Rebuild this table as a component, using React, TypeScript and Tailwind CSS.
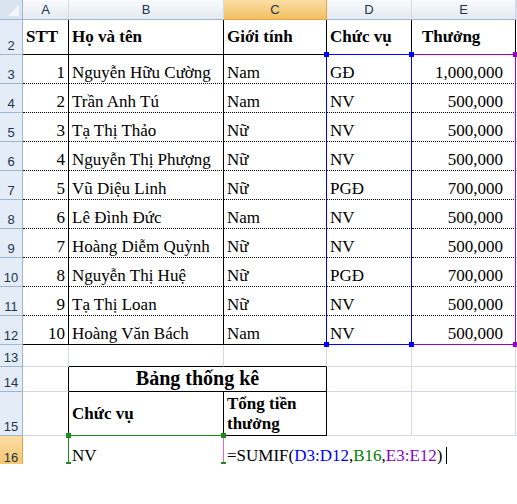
import React from "react";

const data: [number, string, string, string, string][] = [
  [1, "Nguyễn Hữu Cường", "Nam", "GĐ", "1,000,000"],
  [2, "Trần Anh Tú", "Nam", "NV", "500,000"],
  [3, "Tạ Thị Thảo", "Nữ", "NV", "500,000"],
  [4, "Nguyễn Thị Phượng", "Nữ", "NV", "500,000"],
  [5, "Vũ Diệu Linh", "Nữ", "PGĐ", "700,000"],
  [6, "Lê Đình Đức", "Nam", "NV", "500,000"],
  [7, "Hoàng Diễm Quỳnh", "Nữ", "NV", "500,000"],
  [8, "Nguyễn Thị Huệ", "Nữ", "PGĐ", "700,000"],
  [9, "Tạ Thị Loan", "Nữ", "NV", "500,000"],
  [10, "Hoàng Văn Bách", "Nam", "NV", "500,000"],
];

const rh =
  "flex items-end justify-center border-r border-b border-[#9eb6ce] bg-[#e4ecf7] pb-[2px] font-['Liberation_Sans',Arial,sans-serif] text-[13px] leading-none text-[#20344d]";
const rhSel =
  "flex items-end justify-center border-r border-b border-[#f0a04a] bg-linear-to-b from-[#fbdda5] to-[#f4c56a] pb-[2px] font-['Liberation_Sans',Arial,sans-serif] text-[13px] leading-none text-[#20344d]";
const ch =
  "flex items-center justify-center border-r border-b border-r-[#d2dce8] border-b-[#9eb6ce] bg-linear-to-b from-[#f9fbfd] to-[#e5eaf2] font-['Liberation_Sans',Arial,sans-serif] text-[13px] leading-none text-[#20344d]";
const chSel =
  "flex items-center justify-center border-r border-b border-[#f0a04a] bg-linear-to-b from-[#fbdda5] to-[#f2c160] font-['Liberation_Sans',Arial,sans-serif] text-[13px] leading-none text-[#20344d]";

const base =
  "flex overflow-hidden whitespace-nowrap border-r border-b border-[#d0d7e5] px-[3px] leading-[20px] text-[17px] text-black";

function Sq({ c, x, y }: { c: string; x: number; y: number }) {
  return (
    <div
      className={`absolute h-[5px] w-[5px] ${c}`}
      style={{ left: x, top: y }}
    />
  );
}

export default function App() {
  return (
    <div className="h-[504px] w-[517px] bg-white font-['Liberation_Serif','Times_New_Roman',serif]">
      <div className="relative h-[464px] overflow-hidden">
        <div className="grid grid-cols-[23px_46px_155px_103px_85px_104px_1px] grid-rows-[20px_35px_repeat(10,29px)_22px_25px_44px_31px]">
          {/* header row */}
          <div className="relative border-r border-b border-[#9eb6ce] bg-[#d9e4f1]">
            <svg className="absolute right-[3px] bottom-[3px]" width="11" height="11" viewBox="0 0 11 11">
              <polygon points="11,0 11,11 0,11" fill="#f3f6fa" />
            </svg>
          </div>
          <div className={ch}>A</div>
          <div className={ch}>B</div>
          <div className={chSel}>C</div>
          <div className={ch}>D</div>
          <div className={ch}>E</div>
          <div className={ch}></div>

          {/* row 2 */}
          <div className={rh}>2</div>
          <div className={`${base} items-center border-r-black border-b-black font-bold`}>STT</div>
          <div className={`${base} items-center border-r-black border-b-black font-bold`}>Họ và tên</div>
          <div className={`${base} items-center border-r-black border-b-black font-bold`}>Giới tính</div>
          <div className={`${base} items-center border-r-black border-b-black font-bold`}>Chức vụ</div>
          <div className={`${base} items-center border-r-black border-b-black pl-[10px] font-bold`}>Thưởng</div>
          <div className={`${base} px-0`}></div>

          {data.map((r, i) => {
            const last = i === data.length - 1;
            const bb = last ? "border-b-black" : "border-b-black [border-bottom-style:dotted]";
            return (
              <React.Fragment key={i}>
                <div className={rh}>{i + 3}</div>
                <div className={`${base} items-end justify-end border-r-black ${bb}`}>{r[0]}</div>
                <div className={`${base} items-end border-r-black ${bb}`}>{r[1]}</div>
                <div className={`${base} items-end border-r-black ${bb}`}>{r[2]}</div>
                <div className={`${base} items-end border-r-black ${bb}`}>{r[3]}</div>
                <div className={`${base} items-end justify-end pr-[12px] border-r-black ${bb}`}>{r[4]}</div>
                <div className={`${base} px-0`}></div>
              </React.Fragment>
            );
          })}

          {/* row 13 */}
          <div className={rh}>13</div>
          <div className={base}></div>
          <div className={`${base} border-b-black`}></div>
          <div className={`${base} border-b-black`}></div>
          <div className={base}></div>
          <div className={base}></div>
          <div className={`${base} px-0`}></div>

          {/* row 14 */}
          <div className={rh}>14</div>
          <div className={`${base} border-r-black`}></div>
          <div className={`${base} col-span-2 items-end justify-center border-r-black border-b-black pb-[3px] text-[20px] font-bold`}>
            Bảng thống kê
          </div>
          <div className={base}></div>
          <div className={base}></div>
          <div className={`${base} px-0`}></div>

          {/* row 15 */}
          <div className={rh}>15</div>
          <div className={`${base} border-r-black`}></div>
          <div className={`${base} items-center border-r-black border-b-black font-bold`}>Chức vụ</div>
          <div className={`${base} items-center whitespace-normal border-r-black border-b-black font-bold`}>
            <span>
              Tổng tiền
              <br />
              thưởng
            </span>
          </div>
          <div className={base}></div>
          <div className={base}></div>
          <div className={`${base} px-0`}></div>

          {/* row 16 */}
          <div className={rhSel}>16</div>
          <div className={base}></div>
          <div className={`${base} items-end`}>NV</div>
          <div className={`${base} col-span-4 items-end overflow-visible border-r-0`}>
            <span>
              =SUMIF(<span className="text-[#0000ff]">D3:D12</span>,
              <span className="text-[#008000]">B16</span>,
              <span className="text-[#8800cc]">E3:E12</span>)
            </span>
            <span className="mb-[2px] ml-[3px] inline-block h-[17px] w-px bg-black" />
          </div>
        </div>

        {/* purple range E3:E12 */}
        <div className="absolute left-[411px] top-[54px] h-[291px] w-[105px] border border-[#9900cc]" />
        {/* blue range D3:D12 */}
        <div className="absolute left-[326px] top-[54px] h-[291px] w-[86px] border border-[#0000ff]" />
        <Sq c="bg-[#9900cc]" x={513} y={52} />
        <Sq c="bg-[#9900cc]" x={513} y={342} />
        <Sq c="bg-[#0000ff]" x={324} y={52} />
        <Sq c="bg-[#0000ff]" x={409} y={52} />
        <Sq c="bg-[#0000ff]" x={324} y={342} />
        <Sq c="bg-[#0000ff]" x={409} y={342} />

        {/* green range B16 */}
        <div className="absolute left-[68px] top-[435px] h-[40px] w-[156px] border border-[#1a8a1a] border-r-[#dd66dd]" />
        <Sq c="bg-[#1a8a1a]" x={66} y={433} />
        <Sq c="bg-[#1a8a1a]" x={221} y={433} />
        <Sq c="bg-[#1a8a1a]" x={66} y={462} />
        <Sq c="bg-[#1a8a1a]" x={221} y={462} />
      </div>
    </div>
  );
}
